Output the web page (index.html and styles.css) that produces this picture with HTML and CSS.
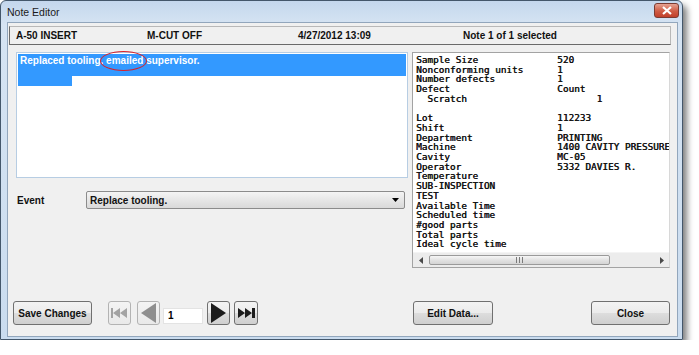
FILE: index.html
```html
<!DOCTYPE html>
<html lang="en">
<head>
  <meta charset="UTF-8">
  <title>Note Editor</title>
  <link rel="stylesheet" href="styles.css">
</head>
<body>
  <div class="window">
    <div class="titlebar">
      <span class="title">Note Editor</span>
      <button class="close-x">
        <svg width="12" height="9" viewBox="0 0 12 9"><path d="M2 1 L10 8 M10 1 L2 8" stroke="#fff" stroke-width="2.2"/></svg>
      </button>
    </div>

    <div class="content">
      <div class="header">
        <span>A-50 INSERT</span>
        <span>M-CUT OFF</span>
        <span>4/27/2012 13:09</span>
        <span>Note 1 of 1 selected</span>
      </div>

      <div class="main">
        <div class="left">
          <div class="note">
            <div class="sel-full">Replaced tooling. emailed supervisor.</div>
            <div class="sel-part"></div>
            <div class="circle"></div>
          </div>
          <div class="event-row">
            <label class="event-label">Event</label>
            <div class="select">
              <span>Replace tooling.</span>
              <svg width="7" height="4" viewBox="0 0 7 4"><path d="M0 0 H7 L3.5 4 Z" fill="#000"/></svg>
            </div>
          </div>
        </div>

        <div class="data">
<pre class="data-text">Sample Size              520
Nonconforming units      1
Number defects           1
Defect                   Count
  Scratch                       1

Lot                      112233
Shift                    1
Department               PRINTING
Machine                  1400 CAVITY PRESSURE
Cavity                   MC-05
Operator                 5332 DAVIES R.
Temperature
SUB-INSPECTION
TEST
Available Time
Scheduled time
#good parts
Total parts
Ideal cycle time</pre>
          <div class="hscroll">
            <div class="arrow">
              <svg width="4" height="7" viewBox="0 0 4 7"><path d="M4 0 V7 L0 3.5 Z" fill="#4a4a4a"/></svg>
            </div>
            <div class="track">
              <div class="thumb">
                <svg width="7" height="6" viewBox="0 0 7 6"><path d="M0.5 0 V6 M3.5 0 V6 M6.5 0 V6" stroke="#7a7a7a" stroke-width="1"/></svg>
              </div>
            </div>
            <div class="arrow">
              <svg width="4" height="7" viewBox="0 0 4 7"><path d="M0 0 V7 L4 3.5 Z" fill="#4a4a4a"/></svg>
            </div>
          </div>
        </div>
      </div>

      <div class="bottom">
        <button class="btn btn-save">Save Changes</button>
        <button class="btn nav disabled nav-first">
          <svg width="17" height="10" viewBox="0 0 17 10"><path d="M0 0 H2 V10 H0 Z M2 5 L9 0 V10 Z M9 5 L16 0 V10 Z" fill="#a3a3a3"/></svg>
        </button>
        <button class="btn nav disabled nav-prev">
          <svg width="15" height="20" viewBox="0 0 15 20"><path d="M15 0 V20 L0 10 Z" fill="#8f8f8f"/></svg>
        </button>
        <input class="page" type="text" value="1">
        <button class="btn nav nav-next">
          <svg width="15" height="20" viewBox="0 0 15 20"><path d="M0 0 V20 L15 10 Z" fill="#1c1c1c"/></svg>
        </button>
        <button class="btn nav nav-last">
          <svg width="17" height="10" viewBox="0 0 17 10"><path d="M0 0 L7 5 L0 10 Z M7 0 L14 5 L7 10 Z M14 0 H17 V10 H14 Z" fill="#1c1c1c"/></svg>
        </button>
        <button class="btn btn-edit">Edit Data...</button>
        <button class="btn btn-close">Close</button>
      </div>
    </div>
  </div>
</body>
</html>
```

FILE: styles.css
```css
body {
  margin: 0;
  padding: 0;
  background-color: #ffffff;
  font-family: "Liberation Sans", Arial, sans-serif;
}
.window {
  width: 683px;
  height: 340px;
  box-sizing: border-box;
  border: 1px solid #44576b;
  border-radius: 6px 6px 0 0;
  background: linear-gradient(#c4d7ed, #d6e4f3 24px, #cadcef);
  box-shadow: 4px 5px 6px rgba(0, 0, 0, 0.5);
  display: flex;
  flex-direction: column;
  padding: 0 4px 2px 6px;
}
.titlebar {
  height: 21px;
  display: flex;
  align-items: center;
  justify-content: space-between;
}
.title {
  font-size: 10.5px;
  color: #1b1b1b;
  margin-top: 1px;
}
.close-x {
  width: 25px;
  height: 15px;
  margin-right: -1px;
  margin-top: -3px;
  padding: 0;
  border: 1px solid #7b3b32;
  border-radius: 3px;
  background: linear-gradient(#e6a292, #cf5b44 55%, #c1402a);
  display: flex;
  align-items: center;
  justify-content: center;
}
.content {
  flex: 1;
  background-color: #f0f0f0;
  border: 1px solid #92a6bc;
  display: flex;
  flex-direction: column;
}
.header {
  margin: 3px 6px 0 1px;
  height: 17px;
  border: 1px solid #b8b8b8;
  border-left-color: #6f6f6f;
  border-bottom: 1px solid #6a6a6a;
  display: grid;
  grid-template-columns: 131px 151px 165px auto;
  align-items: center;
  padding-left: 6px;
  font-size: 10px;
  font-weight: bold;
  color: #111;
}
.main {
  display: flex;
  gap: 4px;
  margin: 7px 7px 0 8px;
}
.left {
  width: 392px;
  display: flex;
  flex-direction: column;
  gap: 13px;
}
.note {
  position: relative;
  height: 126px;
  box-sizing: border-box;
  border: 1px solid #b7cde3;
  background-color: #fff;
  padding: 1px 1px 0 1px;
}
.sel-full {
  height: 22px;
  background-color: #3399ff;
  color: #fff;
  font-size: 10px;
  font-weight: bold;
  line-height: 13px;
  padding-left: 2px;
}
.sel-part {
  width: 54px;
  height: 10px;
  background-color: #3399ff;
}
.circle {
  position: absolute;
  left: 83px;
  top: -2px;
  width: 45px;
  height: 18px;
  border: 1.5px solid #d8202a;
  border-radius: 50%;
}
.event-row {
  display: flex;
  align-items: center;
  height: 18px;
}
.event-label {
  width: 69px;
  padding-left: 1px;
  font-size: 10px;
  font-weight: bold;
  color: #111;
}
.select {
  width: 319px;
  height: 18px;
  box-sizing: border-box;
  border: 1px solid #8b8b8b;
  border-radius: 2px;
  background: linear-gradient(#f4f4f4, #e6e6e6 50%, #d9d9d9);
  display: flex;
  align-items: center;
  justify-content: space-between;
  padding: 0 5px 0 3px;
  font-size: 10px;
  font-weight: bold;
  color: #111;
}
.data {
  width: 258px;
  height: 216px;
  box-sizing: border-box;
  border: 1px solid #a3a3a3;
  border-right-color: #d8d8d8;
  background-color: #fff;
  display: flex;
  flex-direction: column;
  overflow: hidden;
}
.data-text {
  flex: 1;
  margin: 0;
  padding: 2px 0 0 3px;
  font-family: "DejaVu Sans Mono", "Liberation Mono", monospace;
  font-size: 9.4px;
  line-height: 9.7px;
  color: #111;
  text-shadow: 0.4px 0 0 #111;
  white-space: pre;
  overflow: hidden;
}
.hscroll {
  height: 14px;
  display: flex;
  background-color: #ececec;
  border-top: 1px solid #f4f4f4;
}
.arrow {
  width: 15px;
  display: flex;
  align-items: center;
  justify-content: center;
}
.track {
  flex: 1;
  display: flex;
  align-items: center;
}
.thumb {
  width: 181px;
  height: 10px;
  margin-left: 1px;
  box-sizing: border-box;
  border: 1px solid #9a9a9a;
  border-radius: 2px;
  background: linear-gradient(#f6f6f6, #e2e2e2 50%, #d4d4d4);
  display: flex;
  align-items: center;
  justify-content: center;
}
.bottom {
  display: flex;
  align-items: center;
  margin: 33px 0 0 5px;
}
.btn {
  height: 24px;
  box-sizing: border-box;
  border: 1px solid #707070;
  border-radius: 3px;
  background: linear-gradient(#f3f3f3, #ebebeb 50%, #dddddd 51%, #cfcfcf);
  font-family: "Liberation Sans", Arial, sans-serif;
  font-size: 10px;
  font-weight: bold;
  color: #111;
  padding: 0;
}
.btn-save {
  width: 79px;
}
.nav {
  width: 23px;
  display: flex;
  align-items: center;
  justify-content: center;
}
.disabled {
  border-color: #b3b3b3;
  background: linear-gradient(#f4f4f4, #e9e9e9);
}
.nav-first {
  margin-left: 16px;
}
.nav-prev {
  margin-left: 6px;
}
.page {
  width: 40px;
  height: 16px;
  box-sizing: border-box;
  margin: 5px 4px 0 3px;
  border: 1px solid #e3e3e3;
  background-color: #fff;
  font-family: "Liberation Sans", Arial, sans-serif;
  font-size: 10px;
  font-weight: bold;
  padding: 0 0 0 4px;
}
.nav-last {
  margin-left: 4px;
  width: 24px;
}
.btn-edit {
  width: 80px;
  margin-left: 155px;
}
.btn-close {
  width: 79px;
  margin-left: 98px;
}
```
